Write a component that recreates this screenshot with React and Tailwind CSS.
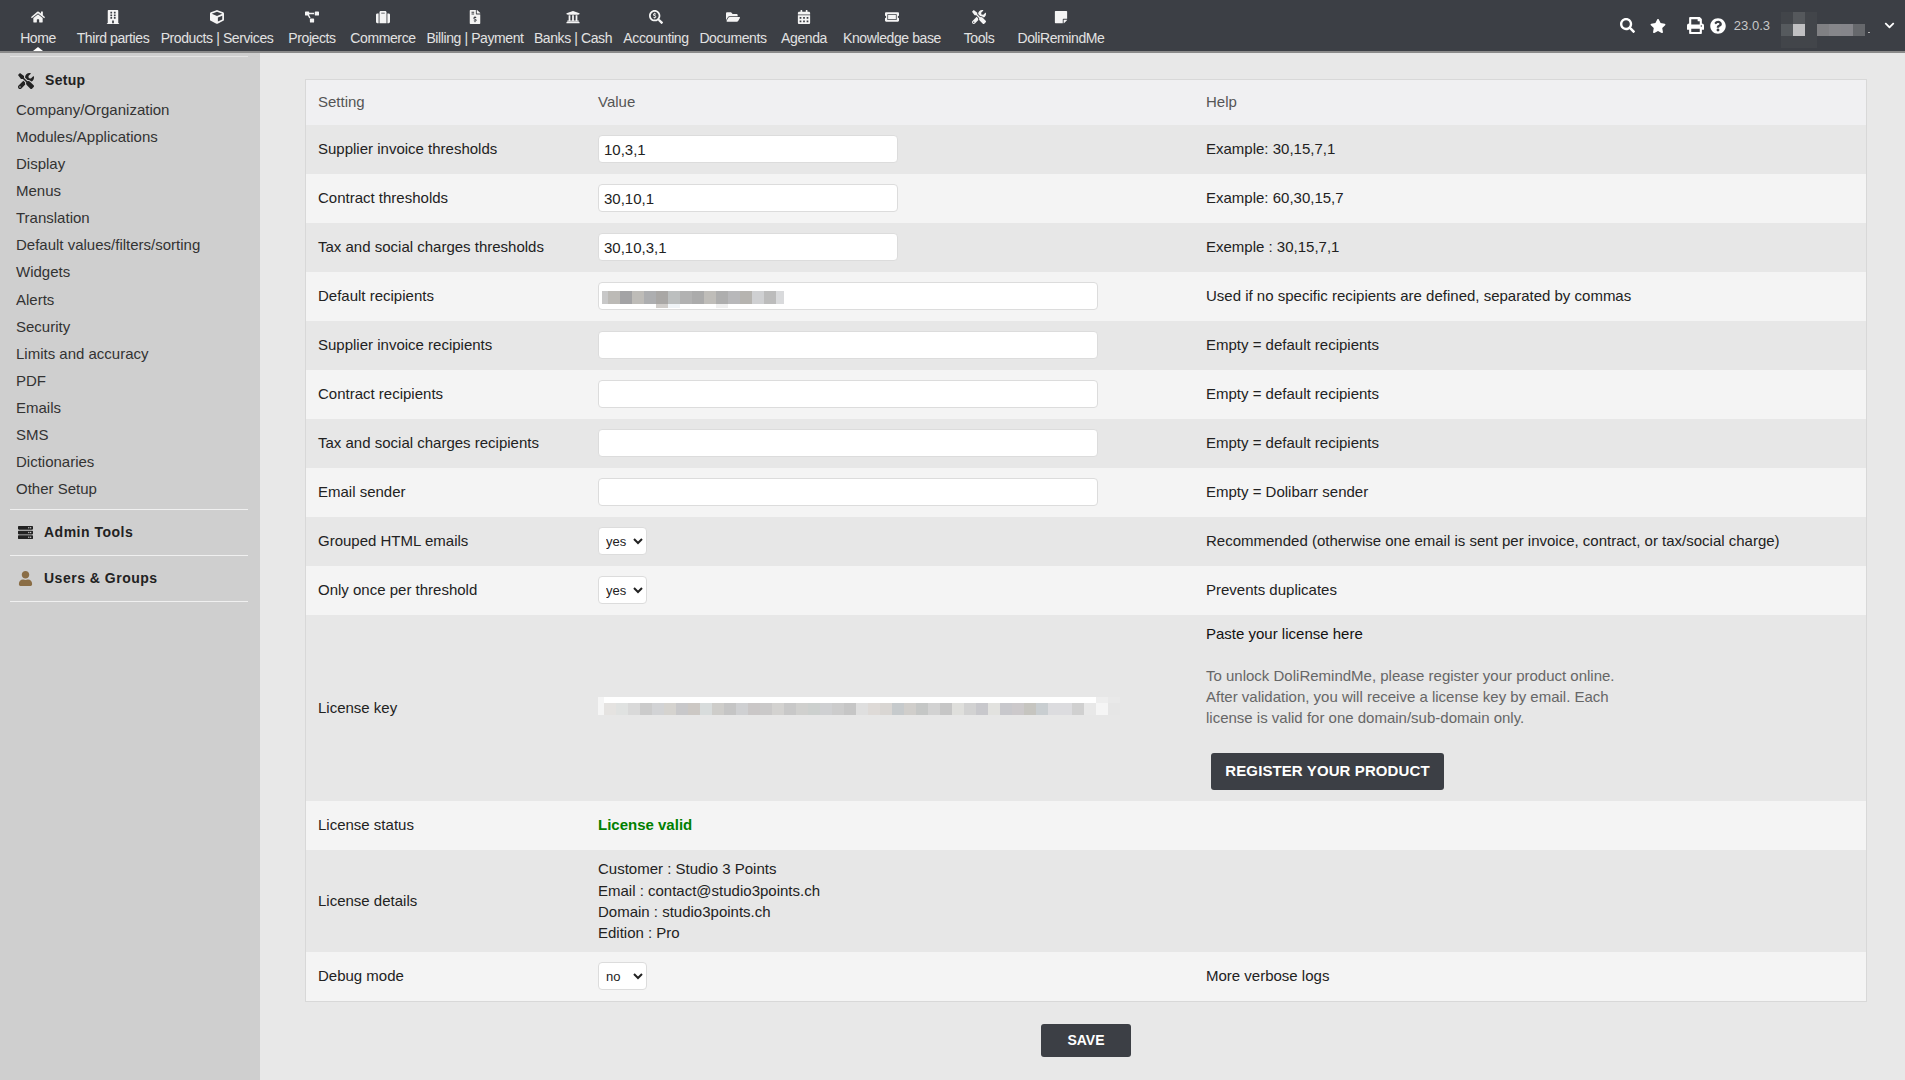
import {
  FaHome, FaBuilding, FaCube, FaProjectDiagram, FaSuitcase, FaFileInvoiceDollar, FaUniversity,
  FaSearchDollar, FaFolderOpen, FaCalendarAlt, FaTicketAlt, FaTools, FaStickyNote, FaSearch,
  FaStar, FaPrint, FaQuestionCircle, FaChevronDown, FaServer, FaUser,
} from 'react-icons/fa'

const menu = [
  { label: 'Home', icon: FaHome, width: 'w-[56px]', active: true },
  { label: 'Third parties', icon: FaBuilding, width: 'w-[94px]' },
  { label: 'Products | Services', icon: FaCube, width: 'w-[114px]' },
  { label: 'Projects', icon: FaProjectDiagram, width: 'w-[76px]' },
  { label: 'Commerce', icon: FaSuitcase, width: 'w-[66px]' },
  { label: 'Billing | Payment', icon: FaFileInvoiceDollar, width: 'w-[118px]' },
  { label: 'Banks | Cash', icon: FaUniversity, width: 'w-[78px]' },
  { label: 'Accounting', icon: FaSearchDollar, width: 'w-[88px]' },
  { label: 'Documents', icon: FaFolderOpen, width: 'w-[66px]' },
  { label: 'Agenda', icon: FaCalendarAlt, width: 'w-[76px]' },
  { label: 'Knowledge base', icon: FaTicketAlt, width: 'w-[100px]' },
  { label: 'Tools', icon: FaTools, width: 'w-[74px]' },
  { label: 'DoliRemindMe', icon: FaStickyNote, width: 'w-[90px]' },
]

const setupLinks = [
  'Company/Organization', 'Modules/Applications', 'Display', 'Menus', 'Translation',
  'Default values/filters/sorting', 'Widgets', 'Alerts', 'Security', 'Limits and accuracy',
  'PDF', 'Emails', 'SMS', 'Dictionaries', 'Other Setup',
]

const recipientsCells = ['#bcbab6', '#a3a3a5', '#bebcb8', '#adaeb0', '#a9a7a5', '#bcbfbf', '#b2b2b2', '#ababab', '#bfbdb9', '#aeaeae', '#b8b8ba', '#b6b4b0', '#cfd0d2', '#bcbcbc']
const licenseCells = ['#e5e3e1', '#e0e2e1', '#d9d9d9', '#cbcbcb', '#d2d3d5', '#d5d3cf', '#c8c8ca', '#ccc8c4', '#d8dcdc', '#cecdca', '#c5c5c5', '#cfd0d2', '#cac7c7', '#cac9c9', '#d3d2d0', '#c8c8c8', '#d0d0ce', '#ccd0ce', '#cfd0d2', '#cccccc', '#c6c6c6', '#dfdfdf', '#dedad7', '#d9d6d3', '#c6cacc', '#d0cecb', '#c5c7c6', '#d2d2d2', '#c6c6c6', '#dfdfdc', '#d2d2d2', '#c8c8cc', '#e2e2df', '#c8c8cc', '#ccc9cb', '#c6c5c0', '#c9ced1', '#dcdcdf', '#dcdcdf', '#d0d0d0', '#e8e8e8', '#f5f5f5', '#e6e6e6']

function RecipientsBlur() {
  return (
    <svg width="186" height="18" className="block">
      <rect x="0" y="0" width="6" height="13" fill="#c8c8c8" />
      {recipientsCells.map((c, i) => (
        <rect key={i} x={6 + i * 12} y="0" width="12" height="13" fill={c} />
      ))}
      <rect x="174" y="0" width="8" height="13" fill="#d9dadc" />
      <rect x="54" y="13" width="12" height="4" fill="#d0cdca" />
      <rect x="66" y="13" width="12" height="4" fill="#f0f4f7" />
      <rect x="114" y="13" width="12" height="4" fill="#f0f0f0" />
    </svg>
  )
}

function LicenseBlur() {
  return (
    <svg width="522" height="18" className="block -mt-[5px]">
      <rect x="0" y="0" width="6" height="18" fill="#f5f5f5" />
      <rect x="6" y="0" width="492" height="6" fill="#ffffff" />
      <rect x="498" y="0" width="12" height="6" fill="#eeeeee" />
      <rect x="510" y="0" width="12" height="6" fill="#e9e9e9" />
      {licenseCells.map((c, i) => (
        <rect key={i} x={6 + i * 12} y="6" width="12" height="12" fill={c} />
      ))}
    </svg>
  )
}

function UserBlur() {
  return (
    <svg width="90" height="36" className="block">
      <rect x="0" y="0" width="36" height="36" fill="#42454a" />
      <rect x="12" y="0" width="12" height="12" fill="#55585c" />
      <rect x="0" y="12" width="12" height="12" fill="#565a5e" />
      <rect x="12" y="12" width="12" height="12" fill="#c0c0c2" />
      <rect x="36" y="12" width="12" height="12" fill="#808083" />
      <rect x="48" y="12" width="12" height="12" fill="#86868a" />
      <rect x="60" y="12" width="12" height="12" fill="#85858a" />
      <rect x="72" y="12" width="12" height="12" fill="#66686c" />
      <rect x="87" y="20" width="2" height="1" fill="#b0b0b0" />
    </svg>
  )
}

function TextInput({ value = '', wide }) {
  return (
    <input
      type="text"
      defaultValue={value}
      className={`${wide ? 'w-[500px]' : 'w-[300px]'} block mb-[1px] h-[28px] bg-white border border-[#dcdcdc] rounded-[4px] px-[5px] text-[15px] text-[#222] outline-none`}
    />
  )
}

function YesNo({ value, options }) {
  return (
    <select
      defaultValue={value}
      className="w-[49px] block mb-[1px] h-[28px] bg-white border border-[#dcdcdc] rounded-[4px] pl-[3px] text-[13px] text-[#222] outline-none"
    >
      {options.map((o) => (
        <option key={o}>{o}</option>
      ))}
    </select>
  )
}

function Row({ label, height = 'h-[49px]', shade, children, help }) {
  return (
    <div className={`grid grid-cols-[280px_608px_1fr] items-center pl-[12px] ${height} ${shade ? 'bg-[#e7e7e7]' : 'bg-[#f4f4f4]'}`}>
      <div>{label}</div>
      <div>{children}</div>
      <div>{help}</div>
    </div>
  )
}

function SideHeading({ icon: Icon, iconClass, label }) {
  return (
    <div className="flex items-center h-[46px] border-b border-[#f0f0f0] ml-[10px] mr-[12px] pl-[8px]">
      <Icon className={iconClass} />
      <span className="ml-[11px] text-[14px] font-bold tracking-[0.5px] text-[#222]">{label}</span>
    </div>
  )
}

export default function App() {
  return (
    <div className="min-h-screen flex flex-col bg-[#e8e8e8] text-[15px] text-[#222]" style={{ fontFamily: '"Liberation Sans", Arial, sans-serif' }}>
      <header className="h-[53px] shrink-0 bg-[#3c3f45] border-b-2 border-[#8a8a8a] flex justify-between">
        <nav className="flex pl-[10px]">
          {menu.map((m) => (
            <a key={m.label} className={`${m.width} relative flex flex-col items-center pt-[10px] text-[14px] tracking-[-0.4px] text-[#e2e2e2] whitespace-nowrap`}>
              <m.icon className="w-[14px] h-[14px] text-[#f4f4f4]" />
              <span className="mt-[7px] leading-[15px]">{m.label}</span>
              {m.active && (
                <span className="absolute bottom-0 left-1/2 -ml-[5px] border-x-[5px] border-x-transparent border-b-[4px] border-b-white" />
              )}
            </a>
          ))}
        </nav>
        <div className="flex items-center text-white pr-[10px]">
          <FaSearch className="w-[15px] h-[15px]" />
          <FaStar className="ml-[15px] w-[16px] h-[16px]" />
          <FaPrint className="ml-[21px] w-[17px] h-[17px]" />
          <FaQuestionCircle className="ml-[6px] w-[16px] h-[16px]" />
          <span className="ml-[8px] text-[13px] text-[#c8c8c8]">23.0.3</span>
          <span className="ml-[11px] mt-[8px]"><UserBlur /></span>
          <FaChevronDown className="ml-[13px] w-[11px] h-[11px]" />
        </div>
      </header>

      <div className="flex flex-1">
        <aside className="w-[260px] shrink-0 bg-[#cfcfcf] pt-[3px]">
          <div className="border-t border-[#e4e4e4] ml-[10px] mr-[12px]" />
          <div className="flex items-center h-[45px] pl-[18px] pt-[2px]">
            <FaTools className="w-[16px] h-[16px] text-[#222]" />
            <span className="ml-[11px] font-bold text-[14px] tracking-[0.3px]">Setup</span>
          </div>
          <div className="pl-[16px] -mt-[6px] text-[#333]">
            {setupLinks.map((l) => (
              <div key={l} className="h-[27.08px] leading-[27px]">{l}</div>
            ))}
          </div>
          <div className="border-b border-[#f0f0f0] ml-[10px] mr-[12px] mt-[7px]" />
          <SideHeading icon={FaServer} iconClass="w-[15px] h-[15px] text-[#222]" label="Admin Tools" />
          <SideHeading icon={FaUser} iconClass="w-[15px] h-[15px] text-[#8a6d45]" label="Users & Groups" />
        </aside>

        <main className="flex-1 pt-[26px] pl-[45px] pr-[38px]">
          <div className="border border-[#d8d8d8]">
            <div className="grid grid-cols-[280px_608px_1fr] items-center pl-[12px] h-[45px] bg-[#f0f0f2] text-[#555]">
              <div>Setting</div>
              <div>Value</div>
              <div>Help</div>
            </div>
            <Row shade label="Supplier invoice thresholds" help="Example: 30,15,7,1"><TextInput value="10,3,1" /></Row>
            <Row label="Contract thresholds" help="Example: 60,30,15,7"><TextInput value="30,10,1" /></Row>
            <Row shade label="Tax and social charges thresholds" help="Exemple : 30,15,7,1"><TextInput value="30,10,3,1" /></Row>
            <Row label="Default recipients" help="Used if no specific recipients are defined, separated by commas">
              <div className="relative w-[500px]">
                <TextInput wide />
                <div className="absolute left-[4px] top-[9px]"><RecipientsBlur /></div>
              </div>
            </Row>
            <Row shade label="Supplier invoice recipients" help="Empty = default recipients"><TextInput wide /></Row>
            <Row label="Contract recipients" help="Empty = default recipients"><TextInput wide /></Row>
            <Row shade label="Tax and social charges recipients" help="Empty = default recipients"><TextInput wide /></Row>
            <Row label="Email sender" help="Empty = Dolibarr sender"><TextInput wide /></Row>
            <Row shade label="Grouped HTML emails" help="Recommended (otherwise one email is sent per invoice, contract, or tax/social charge)">
              <YesNo value="yes" options={['yes', 'no']} />
            </Row>
            <Row label="Only once per threshold" help="Prevents duplicates">
              <YesNo value="yes" options={['yes', 'no']} />
            </Row>
            <Row
              shade
              height="h-[186px]"
              label="License key"
              help={
                <div className="-mt-[3px]">
                  <div className="text-[#111]">Paste your license here</div>
                  <div className="mt-[19px] leading-[21px] text-[#666]">
                    To unlock DoliRemindMe, please register your product online.<br />
                    After validation, you will receive a license key by email. Each<br />
                    license is valid for one domain/sub-domain only.
                  </div>
                  <button className="mt-[25px] ml-[5px] block w-[233px] h-[37px] bg-[#3c3f45] rounded-[3px] text-white font-bold text-[15px] tracking-[0.1px]">
                    REGISTER YOUR PRODUCT
                  </button>
                </div>
              }
            >
              <LicenseBlur />
            </Row>
            <Row label="License status">
              <span className="font-bold text-[#008000]">License valid</span>
            </Row>
            <Row shade height="h-[102px]" label="License details">
              <div className="leading-[21.4px]">
                <div>Customer : Studio 3 Points</div>
                <div>Email : contact@studio3points.ch</div>
                <div>Domain : studio3points.ch</div>
                <div>Edition : Pro</div>
              </div>
            </Row>
            <Row label="Debug mode" help="More verbose logs">
              <YesNo value="no" options={['no', 'yes']} />
            </Row>
          </div>
          <div className="flex justify-center mt-[22px]">
            <button className="w-[90px] h-[33px] bg-[#3c3f45] rounded-[3px] text-white font-bold text-[14px]">SAVE</button>
          </div>
        </main>
      </div>
    </div>
  )
}
